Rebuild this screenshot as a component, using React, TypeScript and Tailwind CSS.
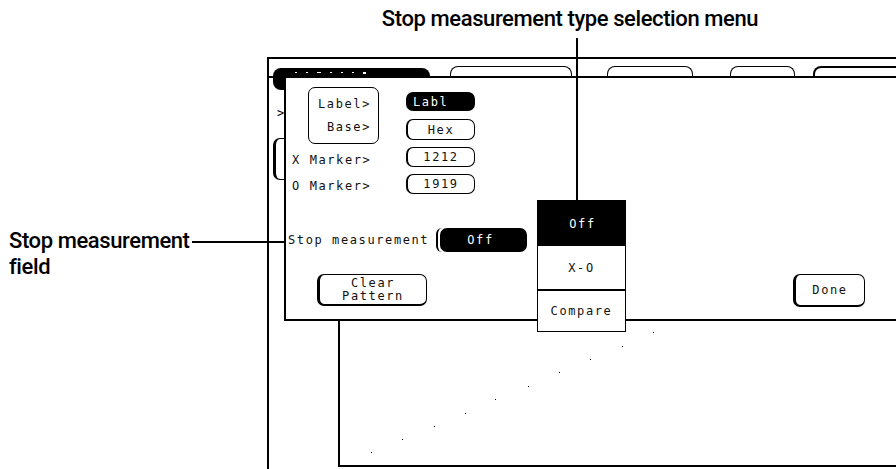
const mono = { fontFamily: '"DejaVu Sans Mono", "Liberation Mono", monospace' };

const dots = [
  [371, 452], [402, 439], [434, 426], [465, 413], [495, 399],
  [528, 386], [559, 372], [590, 359], [622, 346], [653, 332],
];

function Field({ text, dark = false, className = "" }: { text: string; dark?: boolean; className?: string }) {
  return (
    <div
      className={
        "flex w-[69px] items-center justify-center rounded-[7px] text-[12px] leading-none tracking-[1.6px] " +
        (dark ? "bg-black text-white" : "border border-l-2 border-black bg-white text-[#111]") +
        " " +
        className
      }
    >
      {text}
    </div>
  );
}

function Dialog() {
  return (
    <div
      className="absolute left-[15px] top-[17px] h-[245px] w-[660px] border-2 border-black bg-white text-[#111]"
      style={mono}
    >
      {/* label / base block */}
      <div className="flex items-start">
        <div className="ml-[22px] mt-[9px] flex h-[57px] w-[71px] flex-col items-end justify-between rounded-[7px] border border-black py-[10px] pr-[7px] text-[12px] leading-none tracking-[1.6px]">
          <span>Label&gt;</span>
          <span>Base&gt;</span>
        </div>
        <div className="ml-[27px] mt-[14px] flex flex-col gap-[8px]">
          <Field text="Labl" dark className="h-[19px] !justify-start pl-[7px]" />
          <Field text="Hex" className="h-[21px]" />
        </div>
      </div>

      {/* markers */}
      <div className="mt-[3px] flex items-center">
        <span className="w-[120px] pl-[6px] pt-[6px] text-[12px] leading-none tracking-[1.6px]">X Marker&gt;</span>
        <Field text="1212" className="h-[20px]" />
      </div>
      <div className="mt-[7px] flex items-center">
        <span className="w-[120px] pl-[6px] pt-[4px] text-[12px] leading-none tracking-[1.6px]">O Marker&gt;</span>
        <Field text="1919" className="h-[20px]" />
      </div>

      {/* stop measurement */}
      <div className="mt-[34px] flex items-center">
        <span className="w-[150px] pl-[2px] text-[12px] leading-none tracking-[1.6px]">Stop measurement</span>
        <div className="flex h-[24px] items-stretch rounded-l-[6px] border-l-2 border-black pl-[2px]">
          <div className="flex w-[87px] items-center justify-center rounded-[7px] bg-black pr-[6px] text-[12px] leading-none tracking-[1.6px] text-white">
            Off
          </div>
        </div>
      </div>

      {/* buttons */}
      <div className="mt-[22px] flex items-start">
        <div className="ml-[31px] flex h-[32px] w-[110px] flex-col items-center justify-center rounded-[7px] border border-l-[3px] border-b-2 border-black text-[12px] leading-[13px] tracking-[1.6px]">
          <span>Clear</span>
          <span>Pattern</span>
        </div>
        <div className="ml-[366px] flex h-[33px] w-[72px] items-center justify-center rounded-[7px] border border-l-[3px] border-b-2 border-black text-[12px] leading-none tracking-[1.6px]">
          Done
        </div>
      </div>
    </div>
  );
}

function Screen() {
  return (
    <div className="absolute left-[267px] top-[57px] h-[420px] w-[660px] border-l-2 border-t-2 border-black">
      {/* tab strip */}
      <div className="flex h-[19px] items-end border-b-2 border-black pl-[181px]">
        <div className="h-[10px] w-[122px] rounded-t-[8px] border border-b-0 border-black" />
        <div className="ml-[35px] h-[10px] w-[86px] rounded-t-[8px] border border-b-0 border-black" />
        <div className="ml-[37px] h-[10px] w-[65px] rounded-t-[8px] border border-b-0 border-black" />
        <div className="ml-[18px] h-[10px] w-[100px] rounded-t-[8px] border-2 border-b-0 border-black" />
      </div>

      {/* active tab, partly hidden by the dialog */}
      <div className="absolute left-[4px] top-[9px] flex h-[22px] w-[157px] items-start gap-[9px] rounded-[8px] bg-black pl-[22px] pt-[4px]">
        <span className="h-px w-[2px] bg-white" />
        <span className="h-px w-[2px] bg-white" />
        <span className="h-px w-[4px] bg-white" />
        <span className="h-px w-[2px] bg-white" />
        <span className="h-px w-[2px] bg-white" />
        <span className="h-px w-[2px] bg-white" />
        <span className="h-[2px] w-[3px] bg-white" />
      </div>

      {/* background fragments peeking out on the left */}
      <span className="absolute left-[8px] top-[48px] text-[12px] leading-none" style={mono}>
        &gt;
      </span>
      <div className="absolute left-[4px] top-[79px] h-[42px] w-[20px] rounded-l-[7px] border-y border-l-[3px] border-black" />

      {/* waveform area */}
      <div className="absolute left-[69px] top-[259px] h-[149px] w-[600px] border-b-2 border-l-2 border-black" />
      {dots.map(([x, y], i) => (
        <span
          key={i}
          className="absolute h-px w-px bg-black"
          style={{ left: x - 269, top: y - 59 }}
        />
      ))}

      <Dialog />
    </div>
  );
}

function Menu() {
  return (
    <div
      className="absolute left-[537px] top-[200px] flex h-[132px] w-[89px] flex-col border border-black bg-white text-[12px] leading-none tracking-[1.6px] text-[#111]"
      style={mono}
    >
      <div className="flex h-[45px] items-center justify-center bg-black pl-[2px] text-white">Off</div>
      <div className="flex h-[43px] items-center justify-center">X-O</div>
      <div className="flex flex-1 items-center justify-center border-t-2 border-black">Compare</div>
    </div>
  );
}

export default function App() {
  const label = { fontFamily: 'Roboto, "Liberation Sans", sans-serif' };
  return (
    <div className="relative h-[469px] w-[896px] overflow-hidden bg-white text-black">
      <Screen />
      <Menu />

      {/* callout: menu */}
      <div
        className="absolute left-[370px] top-[6px] w-[400px] whitespace-nowrap text-center text-[22px] font-medium leading-[26px] tracking-[-0.4px]"
        style={label}
      >
        Stop measurement type selection menu
      </div>
      <div className="absolute left-[576px] top-[38px] h-[162px] w-[2px] bg-black" />

      {/* callout: stop measurement field */}
      <div
        className="absolute left-[9px] top-[228px] whitespace-nowrap text-[22px] font-medium leading-[26px] tracking-[-0.4px]"
        style={label}
      >
        <div>Stop measurement</div>
        <div>field</div>
      </div>
      <div className="absolute left-[192px] top-[241px] h-[2px] w-[93px] bg-black" />
    </div>
  );
}
